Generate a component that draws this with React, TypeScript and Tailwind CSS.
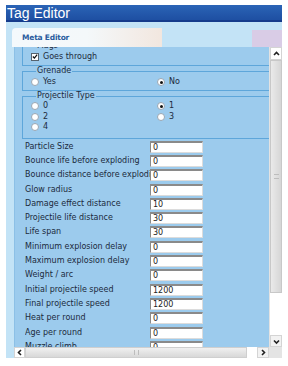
import React from "react";

/** Filas de propiedades numéricas */
const FIELDS: { label: string; value: string }[] = [
  { label: "Particle Size", value: "0" },
  { label: "Bounce life before exploding", value: "0" },
  { label: "Bounce distance before exploding", value: "0" },
  { label: "Glow radius", value: "0" },
  { label: "Damage effect distance", value: "10" },
  { label: "Projectile life distance", value: "30" },
  { label: "Life span", value: "30" },
  { label: "Minimum explosion delay", value: "0" },
  { label: "Maximum explosion delay", value: "0" },
  { label: "Weight / arc", value: "0" },
  { label: "Initial projectile speed", value: "1200" },
  { label: "Final projectile speed", value: "1200" },
  { label: "Heat per round", value: "0" },
  { label: "Age per round", value: "0" },
  { label: "Muzzle climb", value: "0" },
];

function Radio({ checked, label }: { checked?: boolean; label: string }) {
  return (
    <div className="flex items-center gap-[4px] h-full">
      <span className="w-[8px] h-[8px] rounded-full border border-[#9aa6b2] bg-white flex items-center justify-center shrink-0">
        {checked && <span className="w-[3px] h-[3px] rounded-full bg-[#111]" />}
      </span>
      <span>{label}</span>
    </div>
  );
}

function Chevron({ dir }: { dir: "up" | "down" | "left" | "right" }) {
  const pts = {
    up: "2,6 4.5,3.5 7,6",
    down: "2,3.5 4.5,6 7,3.5",
    left: "6,2 3.5,4.5 6,7",
    right: "3,2 5.5,4.5 3,7",
  }[dir];
  return (
    <svg width="9" height="9" viewBox="0 0 9 9">
      <polyline points={pts} fill="none" stroke="#222" strokeWidth="1.6" />
    </svg>
  );
}

export default function App() {
  return (
    <div className="w-[288px] h-[366px] bg-white pt-[5px] pl-[6px] font-['DejaVu_Sans',sans-serif] text-[8px] text-[#1b2a3c] overflow-hidden">
      <div className="w-[276px]">
        {/* Barra de título */}
        <div className="h-[17px] bg-gradient-to-b from-[#2b64b6] to-[#1e4fa2] border-b-2 border-[#153b8b] flex items-center pl-[1px]">
          <span className="text-white text-[14px] leading-none font-['Liberation_Sans',sans-serif]">
            Tag Editor
          </span>
        </div>

        <div className="bg-[#c3e3f6]">
          {/* Pestañas */}
          <div className="h-[25px] flex items-end">
            <div className="ml-[6px] w-[150px] h-[19px] rounded-tl-[4px] bg-gradient-to-r from-[#f4f9fc] via-[#f4f8fa] to-[#f2e7df] flex items-center pl-[10px]">
              <span className="font-bold text-[#2a5c9e] text-[7.5px] tracking-[-0.2px]">Meta Editor</span>
            </div>
            <div className="ml-auto w-[30px] h-[17px] bg-[#d9cce6]" />
          </div>

          {/* Panel con scroll */}
          <div className="flex">
            <div className="w-[8px]" />
            <div className="w-[255px] h-[300px] overflow-hidden bg-[#9ccbed] border-l border-[#8cc0e6]">
              <div className="-mt-[6px]">
                <fieldset className="ml-[7px] w-[252px] border border-[#5ea6da] pl-[8px] pb-[3px]">
                  <legend className="ml-[5px] px-[1px] h-[10px] leading-[10px]">Flags</legend>
                  <div className="h-[11px] flex items-center gap-[4px]">
                    <span className="w-[8px] h-[8px] border border-[#55636f] bg-white flex items-center justify-center">
                      <svg width="7" height="7" viewBox="0 0 7 7">
                        <polyline points="1,3.5 2.8,5.4 6,1.2" fill="none" stroke="#111" strokeWidth="1.5" />
                      </svg>
                    </span>
                    <span>Goes through</span>
                  </div>
                </fieldset>

                <fieldset className="ml-[7px] w-[252px] border border-[#5ea6da] pl-[8px] pb-[3px]">
                  <legend className="ml-[5px] px-[1px] h-[10px] leading-[10px]">Grenade</legend>
                  <div className="grid grid-cols-[126px_1fr] h-[11px]">
                    <Radio label="Yes" />
                    <Radio checked label="No" />
                  </div>
                </fieldset>

                <fieldset className="ml-[7px] w-[252px] border border-[#5ea6da] pl-[8px] pb-[5px]">
                  <legend className="ml-[5px] px-[1px] h-[10px] leading-[10px]">Projectile Type</legend>
                  <div className="grid grid-cols-[126px_1fr] auto-rows-[10.5px]">
                    <Radio label="0" />
                    <Radio checked label="1" />
                    <Radio label="2" />
                    <Radio label="3" />
                    <Radio label="4" />
                  </div>
                </fieldset>

                <div className="pl-[10px] pt-[1px]">
                  {FIELDS.map((f) => (
                    <div key={f.label} className="h-[14.3px] flex items-center">
                      <div className="w-[125px] overflow-hidden whitespace-nowrap">{f.label}</div>
                      <div className="w-[53px] h-[12px] bg-white border-t-2 border-l border-[#8a8a8a] border-r border-b border-r-[#dcdcdc] border-b-[#dcdcdc] pl-[2px] leading-[10px] text-[#222]">
                        {f.value}
                      </div>
                    </div>
                  ))}
                </div>
              </div>
            </div>

            {/* Barra vertical */}
            <div className="w-[13px] h-[300px] flex flex-col bg-[#f7f7f7] border-l border-[#e2e2e2]">
              <div className="h-[13px] flex items-center justify-center bg-white border border-[#d4d4d4]">
                <Chevron dir="up" />
              </div>
              <div className="h-[233px] bg-gradient-to-r from-[#eaeaea] to-[#d6d6d6] border border-[#c8c8c8] flex items-center justify-center">
                <span className="w-[5px] h-[5px] border-y border-[#bdbdbd]" />
              </div>
              <div className="flex-1 bg-white" />
              <div className="h-[12px] flex items-center justify-center bg-[#f2f2f2] border border-[#d4d4d4]">
                <Chevron dir="down" />
              </div>
            </div>
          </div>

          {/* Barra horizontal */}
          <div className="flex h-[11px]">
            <div className="w-[8px]" />
            <div className="w-[11px] flex items-center justify-center bg-white border border-[#d4d4d4]">
              <Chevron dir="left" />
            </div>
            <div className="w-[222px] bg-gradient-to-b from-[#f0f0f0] to-[#d8d8d8] border border-[#cfcfcf] flex items-center justify-center">
              <span className="w-[5px] h-[5px] border-x border-[#bdbdbd]" />
            </div>
            <div className="w-[10px] bg-white" />
            <div className="w-[12px] flex items-center justify-center bg-[#f2f2f2] border border-[#d4d4d4]">
              <Chevron dir="right" />
            </div>
            <div className="flex-1 bg-[#e4e4e4]" />
          </div>
        </div>
      </div>
    </div>
  );
}
